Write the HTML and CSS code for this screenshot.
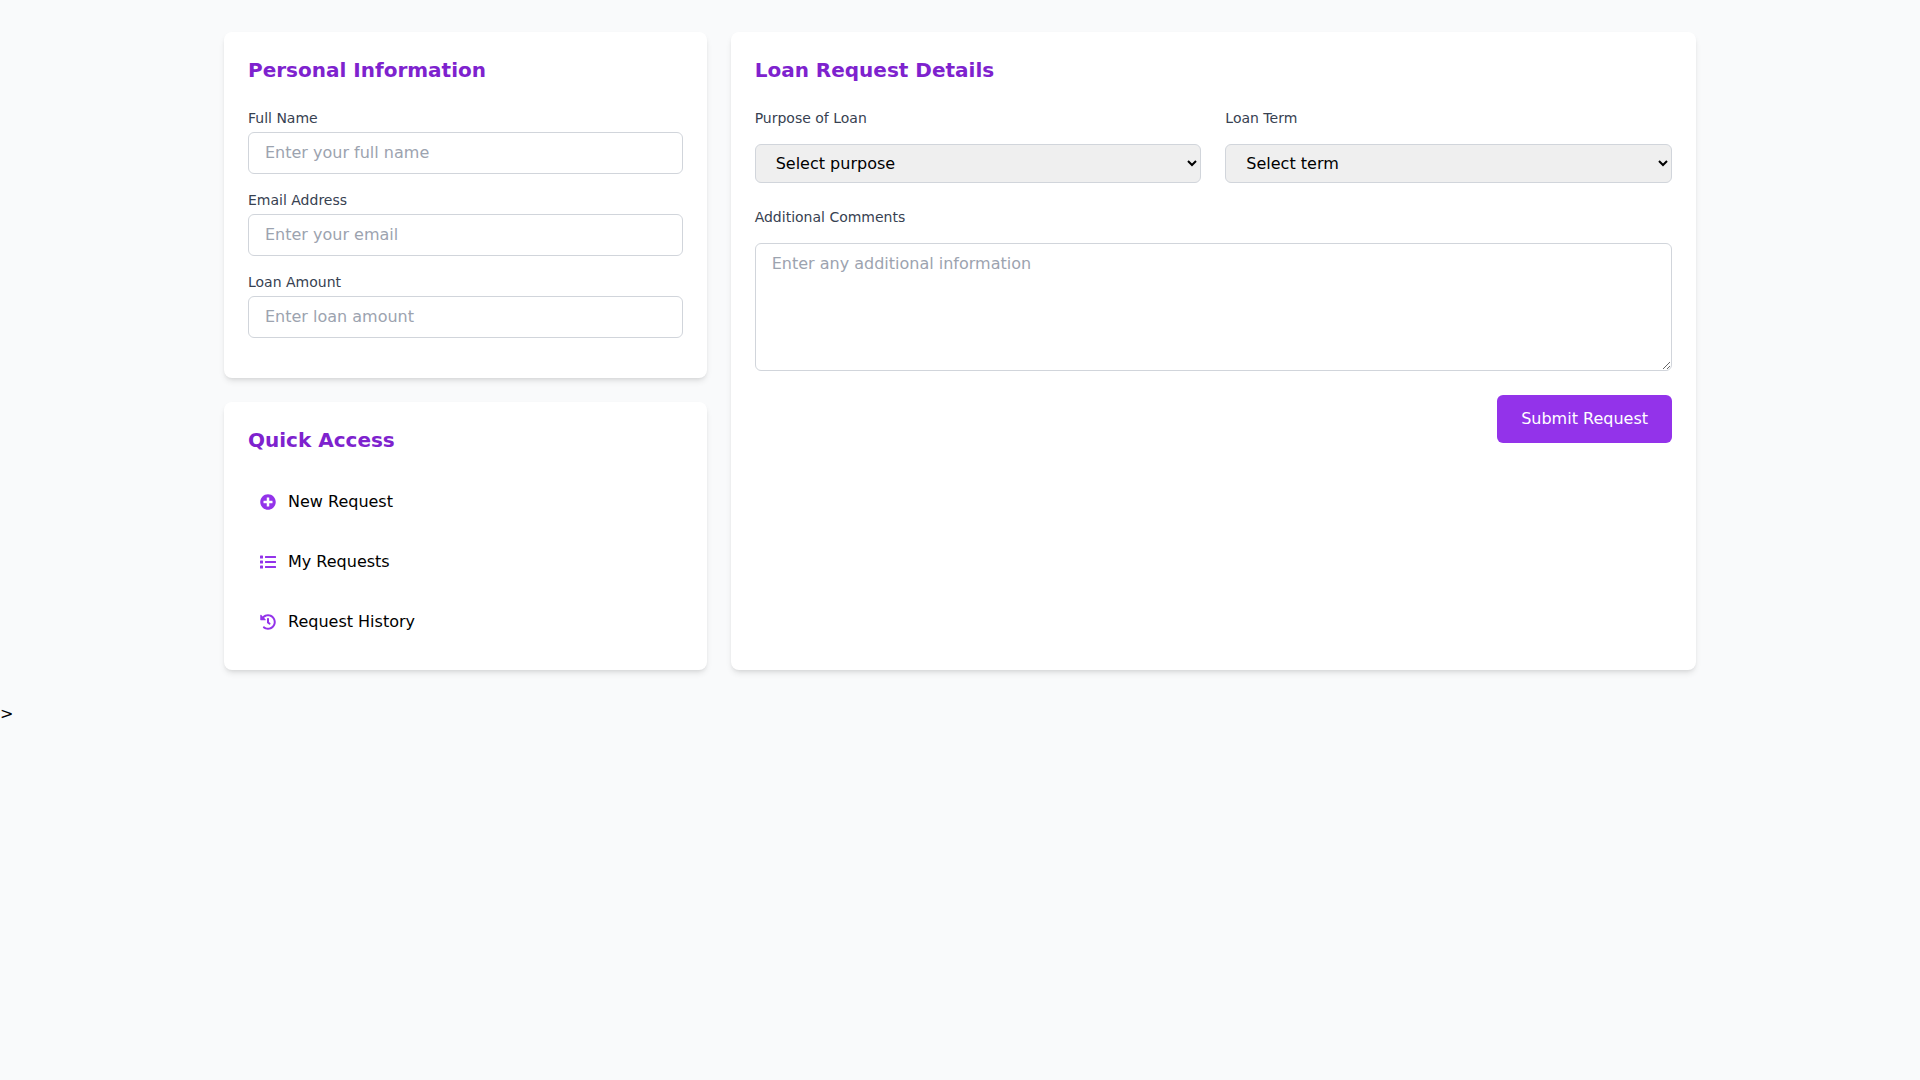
FILE: index.html
```
<!DOCTYPE html>
<html lang="en">
<head>
  <meta charset="UTF-8">
  <meta name="viewport" content="width=device-width, initial-scale=1.0">
  <title>Loan Request</title>
  <link rel="stylesheet" href="styles.css">
</head>
<body>
  <div class="container">
    <!-- Left column -->
    <div class="sidebar">
      <div class="card">
        <h2>Personal Information</h2>
        <div class="field">
          <label for="name">Full Name</label>
          <input type="text" id="name" placeholder="Enter your full name">
        </div>
        <div class="field">
          <label for="email">Email Address</label>
          <input type="email" id="email" placeholder="Enter your email">
        </div>
        <div class="field">
          <label for="amount">Loan Amount</label>
          <input type="number" id="amount" placeholder="Enter loan amount">
        </div>
      </div>

      <div class="card">
        <h2>Quick Access</h2>
        <nav class="links">
          <a href="#">
            <svg class="icon" viewBox="0 0 512 512"><path d="M256 8C119 8 8 119 8 256s111 248 248 248 248-111 248-248S393 8 256 8zm144 276c0 6.6-5.4 12-12 12h-92v92c0 6.600-5.400 12-12 12h-56c-6.600 0-12-5.400-12-12v-92h-92c-6.600 0-12-5.400-12-12v-56c0-6.600 5.400-12 12-12h92v-92c0-6.600 5.400-12 12-12h56c6.600 0 12 5.400 12 12v92h92c6.600 0 12 5.400 12 12v56z"/></svg>
            <span>New Request</span>
          </a>
          <a href="#">
            <svg class="icon" viewBox="0 0 512 512"><path d="M80 368H16a16 16 0 0 0-16 16v64a16 16 0 0 0 16 16h64a16 16 0 0 0 16-16v-64a16 16 0 0 0-16-16zm0-320H16A16 16 0 0 0 0 64v64a16 16 0 0 0 16 16h64a16 16 0 0 0 16-16V64a16 16 0 0 0-16-16zm0 160H16a16 16 0 0 0-16 16v64a16 16 0 0 0 16 16h64a16 16 0 0 0 16-16v-64a16 16 0 0 0-16-16zm416 176H176a16 16 0 0 0-16 16v32a16 16 0 0 0 16 16h320a16 16 0 0 0 16-16v-32a16 16 0 0 0-16-16zm0-320H176a16 16 0 0 0-16 16v32a16 16 0 0 0 16 16h320a16 16 0 0 0 16-16V80a16 16 0 0 0-16-16zm0 160H176a16 16 0 0 0-16 16v32a16 16 0 0 0 16 16h320a16 16 0 0 0 16-16v-32a16 16 0 0 0-16-16z"/></svg>
            <span>My Requests</span>
          </a>
          <a href="#">
            <svg class="icon" viewBox="0 0 512 512"><path d="M504 255.531c.253 136.640-111.180 248.372-247.820 248.468-59.015.042-113.223-20.530-155.822-54.911-11.077-8.940-11.905-25.541-1.839-35.607l11.267-11.267c8.609-8.609 22.353-9.551 31.891-1.984C173.062 425.135 212.781 440 256 440c101.705 0 184-82.311 184-184 0-101.705-82.311-184-184-184-48.814 0-93.149 18.969-126.068 49.932l50.754 50.754c10.080 10.080 2.941 27.314-11.313 27.314H24c-8.837 0-16-7.163-16-16V38.627c0-14.254 17.234-21.393 27.314-11.314l49.372 49.372C129.209 34.136 189.552 8 256 8c136.810 0 247.747 110.780 248 247.531zm-180.912 78.784l9.823-12.630c8.138-10.463 6.253-25.542-4.210-33.679L288 256.349V152c0-13.255-10.745-24-24-24h-16c-13.255 0-24 10.745-24 24v135.651l65.409 50.874c10.463 8.137 25.541 6.253 33.679-4.210z"/></svg>
            <span>Request History</span>
          </a>
        </nav>
      </div>
    </div>

    <!-- Loan details -->
    <div class="card">
      <h2>Loan Request Details</h2>
      <form class="loan-form">
        <div class="row">
          <div class="group">
            <label for="purpose">Purpose of Loan</label>
            <select id="purpose">
              <option>Select purpose</option>
            </select>
          </div>
          <div class="group">
            <label for="term">Loan Term</label>
            <select id="term">
              <option>Select term</option>
            </select>
          </div>
        </div>
        <div class="group">
          <label for="comments">Additional Comments</label>
          <textarea id="comments" placeholder="Enter any additional information"></textarea>
        </div>
        <button type="submit">Submit Request</button>
      </form>
    </div>
  </div>
  &gt;
</body>
</html>
```
FILE: styles.css
```
* { box-sizing: border-box; }
body {
  margin: 0;
  background: #f9fafb;
  color: #000;
  font-family: "DejaVu Sans", sans-serif;
  font-size: 16px; line-height: 24px;
}
.container {
  display: grid; grid-template-columns: minmax(0, 1fr) minmax(0, 2fr);
  gap: 24px;
  max-width: 1536px; margin: 0 auto; padding: 32px;
}
/* 1fr/2fr split leaves the gap out of both tracks */
.sidebar { display: flex; flex-direction: column; gap: 24px; }
.card {
  padding: 24px;
  background: #fff; border-radius: 8px;
  box-shadow: 0 4px 6px -1px rgba(0,0,0,0.1), 0 2px 4px -2px rgba(0,0,0,0.1);
}
h2 {
  margin: 0 0 24px;
  font-size: 20px; line-height: 28px; font-weight: 600; color: #7e22ce;
}
label {
  display: block;
  font-size: 14px; line-height: 20px; color: #374151;
}
input, select, textarea, button { font: inherit; color: inherit; }
input, select, textarea {
  display: block; width: 100%;
  padding: 8px 16px;
  border: 1px solid #d1d5db; border-radius: 6px;
}
input, textarea { background: #fff; }
input::placeholder, textarea::placeholder { color: #9ca3af; opacity: 1; }
.field { margin-bottom: 16px; }
.field label { margin-bottom: 4px; }

/* Quick access */
.links { display: flex; flex-direction: column; gap: 12px; }
.links a {
  display: flex; align-items: center; gap: 12px;
  padding: 12px; border-radius: 6px;
  color: inherit; text-decoration: none;
}
.icon { width: 16px; height: 16px; fill: #9333ea; }

/* Loan form */
.loan-form { display: flex; flex-direction: column; gap: 24px; }
.row { display: grid; grid-template-columns: 1fr 1fr; gap: 24px; }
.group label { margin-bottom: 16px; }
select { height: 39px; background: #efefef; }
textarea { height: 128px; resize: vertical; }
button {
  align-self: flex-end;
  padding: 12px 24px;
  border: 0; border-radius: 6px;
  background: #9333ea; color: #fff; cursor: pointer;
}
```
